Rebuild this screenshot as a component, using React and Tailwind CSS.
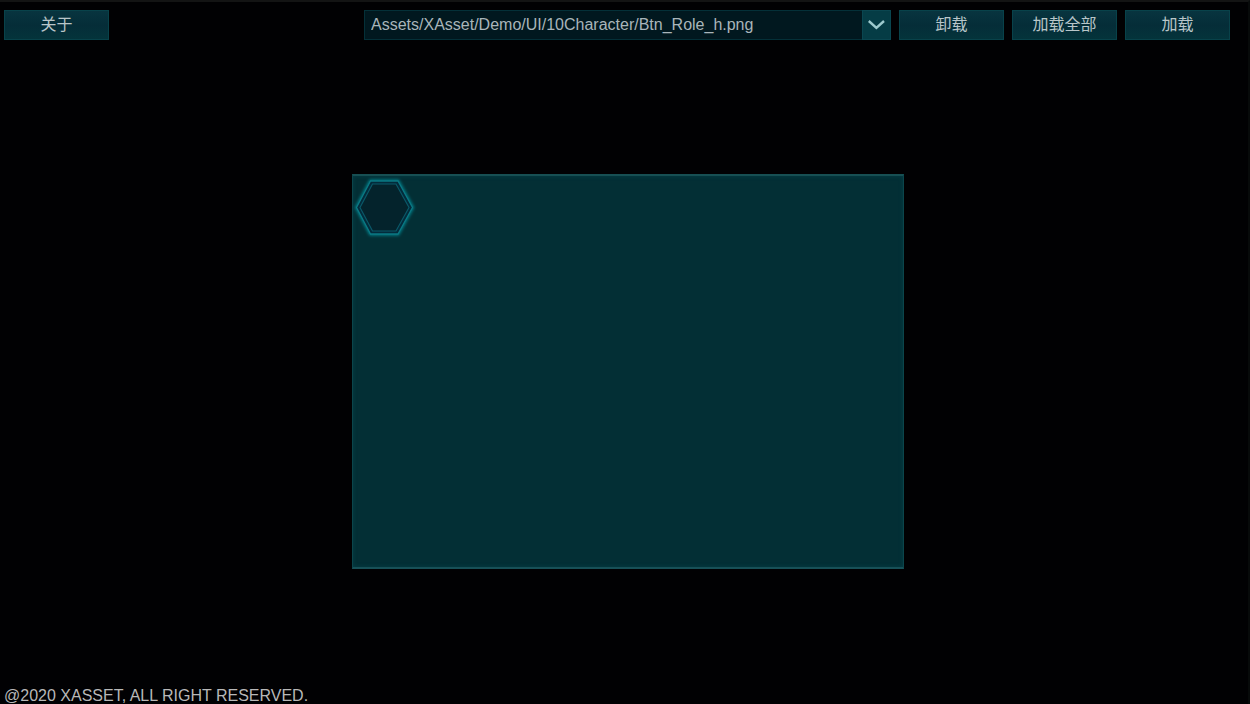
const assets = ['Assets/XAsset/Demo/UI/10Character/Btn_Role_h.png'];

function BarButton({ children }) {
  return (
    <button
      type="button"
      className="h-[30px] w-[105px] shrink-0 border border-[#08424a] bg-linear-to-b from-[#08343f] via-[#052d38] to-[#04343b] text-base leading-none text-[#b9c6c9] hover:brightness-125"
    >
      {children}
    </button>
  );
}

function AssetSelect() {
  return (
    <div className="relative ml-auto min-w-0 max-w-[527px] flex-1">
      <select
        aria-label="Asset"
        className="block h-[30px] w-full appearance-none border border-[#043038] bg-[#01181f] pr-8 pl-1.5 text-base text-[#a9b5ba]"
      >
        {assets.map((path) => (
          <option key={path}>{path}</option>
        ))}
      </select>
      <span className="pointer-events-none absolute inset-y-0 right-0 flex w-[29px] items-center justify-center border border-[#0a4650] bg-[#053c45]">
        <svg viewBox="0 0 18 12" className="h-3 w-[18px]" fill="none" stroke="#9cc9cd" strokeWidth="2.4" aria-hidden="true">
          <path d="M.8 2 8.400 8.800 16 2" />
        </svg>
      </span>
    </div>
  );
}

function Hexagon() {
  return (
    <svg viewBox="1 1 64 64" className="size-16" fill="none" aria-hidden="true">
      <defs>
        <filter id="glow" x="-20%" y="-20%" width="140%" height="140%">
          <feGaussianBlur stdDeviation="1.8" />
        </filter>
      </defs>
      <path d="M18.500 6h27.500L60.500 32.500 46 59H18.500L4.500 32.500Z" stroke="#06818b" strokeWidth="3" filter="url(#glow)" />
      <path d="M18.500 6h27.500L60.500 32.500 46 59H18.500L4.500 32.500Z" fill="#032b3b" stroke="#0b7883" strokeWidth="1.300" />
      <path d="M20.500 9h23.500L57 32.500 44 56H20.500L8 32.500Z" fill="#04232c" stroke="#0a5868" strokeWidth="1.200" />
    </svg>
  );
}

export default function App() {
  return (
    <div className="flex min-h-screen flex-col border-t-2 border-r-2 border-t-[#131414] border-r-[#070a0a] bg-[#010103] font-['Liberation_Sans','Noto_Sans_CJK_SC',sans-serif]">
      <header className="flex items-center gap-2 pt-2 pr-[18px] pl-1">
        <BarButton>关于</BarButton>
        <AssetSelect />
        <BarButton>卸载</BarButton>
        <BarButton>加载全部</BarButton>
        <BarButton>加载</BarButton>
      </header>
      <main className="flex flex-1 items-center justify-center pt-3.5 pl-2">
        <section
          aria-label="Preview"
          className="h-[395px] w-full max-w-[552px] border border-t-2 border-b-2 border-[#0b454b] border-t-[#174f53] border-b-[#175057] bg-[#032f35] shadow-[inset_0_0_4px_#063f47]"
        >
          <Hexagon />
        </section>
      </main>
      <footer className="pl-1 text-base leading-4 text-[#b8b8b8]">@2020 XASSET, ALL RIGHT RESERVED.</footer>
    </div>
  );
}
